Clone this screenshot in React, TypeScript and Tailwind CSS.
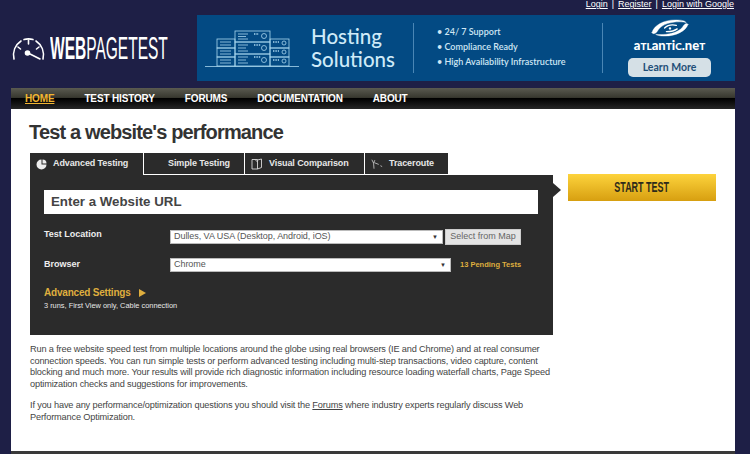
import React from 'react';

const tabs = [
  { label: 'Advanced Testing', width: 'w-[114px]', icon: 'globe', active: true },
  { label: 'Simple Testing', width: 'w-[101px]', icon: '', active: false },
  { label: 'Visual Comparison', width: 'w-[120px]', icon: 'doc', active: false },
  { label: 'Traceroute', width: 'w-[84px]', icon: 'trace', active: false },
];

function Gauge() {
  return (
    <svg className="shrink-0" width="33" height="24" viewBox="0 0 33 24" fill="none" stroke="#fff" strokeWidth="1.6" strokeLinecap="round">
      <path d="M2 22 C0.5 15 3 8 9 4 M12 2.6 C15 1.6 18 1.6 21 2.6 M24 4 C30 8 32.5 15 31 22" />
      <path d="M16.5 3 V7 M6 10 L8.5 12 M27 10 L24.5 12" />
      <path d="M16 16 L28 22" />
      <circle cx="15.5" cy="16" r="2" fill="#fff" />
    </svg>
  );
}

function Rack() {
  return (
    <svg width="94" height="38" viewBox="0 0 94 38" fill="none" stroke="#a9d6ee" strokeWidth="0.8">
      <path d="M0 36.5 H94" />
      <rect x="30" y="1" width="35" height="11" />
      <rect x="30" y="12" width="35" height="12" />
      <rect x="30" y="24" width="35" height="12" />
      <rect x="12" y="9" width="18" height="9" />
      <rect x="12" y="18" width="18" height="9" />
      <rect x="12" y="27" width="18" height="9" />
      <rect x="65" y="9" width="19" height="9" />
      <rect x="65" y="18" width="19" height="9" />
      <rect x="65" y="27" width="19" height="9" />
      <path d="M33 4 H43 M33 6.5 H41 M33 9 H43 M33 15 H43 M33 18 H41 M33 21 H43 M33 27 H43 M33 30 H41 M33 33 H43 M15 12 H26 M15 15 H26 M15 21 H26 M15 24 H26 M15 30 H26 M15 33 H26" />
      <circle cx="59" cy="6" r="2.5" />
      <circle cx="59" cy="18" r="2.5" />
      <circle cx="59" cy="30" r="2.5" />
      <circle cx="79" cy="13" r="2" />
      <circle cx="79" cy="22" r="2" />
      <circle cx="79" cy="31" r="2" />
      <path d="M49 4 H54 M49 15 H56 M49 27 H56 M68 12 H74 M68 21 H74 M68 30 H74" strokeWidth="1.4" strokeDasharray="1.4 1" />
    </svg>
  );
}

function Swirl() {
  return (
    <svg width="42" height="18" viewBox="0 0 42 20" fill="none" stroke="#fff" strokeLinecap="round">
      <path d="M1 15 C3 7 14 1 27 1 C34 1 38 2 39 4 C32 2 14 3 8 12 C6 16 2 18 1 15 Z" fill="#fff" strokeWidth="0.4" />
      <path d="M41 6 C39 13 28 19 15 19 C10 19 6 18 5 17 C12 18 29 17 35 9 C37 5 40 4 41 6 Z" fill="#fff" strokeWidth="0.4" />
      <path d="M15 10 C18 7 23 6 28 7 M29 11 C25 14 20 14 17 14" strokeWidth="1.5" />
      <circle cx="21" cy="10.5" r="1.3" fill="#fff" stroke="none" />
    </svg>
  );
}

function TabIcon({ name }: { name: string }) {
  if (name === 'globe') {
    return (
      <svg width="11" height="11" viewBox="0 0 11 11" fill="#ededed">
        <path d="M5.5 0.5 A5 5 0 1 0 10.5 5.5 H5.5 Z" />
        <path d="M6.5 0.5 A4 4 0 0 1 10.5 4.5 H6.5 Z" />
      </svg>
    );
  }
  if (name === 'doc') {
    return (
      <svg width="12" height="12" viewBox="0 0 12 12" fill="none" stroke="#d8d8d8" strokeWidth="0.9">
        <path d="M1 1.5 H6.5 V11 H1 Z M6.5 2 L10.5 1 V9.5 L6.5 11 M4 1.5 L6.5 4" />
      </svg>
    );
  }
  if (name === 'trace') {
    return (
      <svg width="12" height="12" viewBox="0 0 14 12" fill="none" stroke="#d8d8d8" strokeWidth="0.9">
        <path d="M1 1 L3 5 L3.5 11.5 M3 5 L4.5 1.5 M4 4.5 L9 6.5 M11 8 L13 9" />
      </svg>
    );
  }
  return null;
}

function FakeSelect({ value, width }: { value: string; width: string }) {
  return (
    <div className={`${width} h-[14px] bg-white flex items-center justify-between pl-[3px] pr-[4px] border border-[#bbb] text-[9px] tracking-[-0.05px] text-[#555]`}>
      <span>{value}</span>
      <span className="text-[6px] text-[#333]">▼</span>
    </div>
  );
}

export default function App() {
  return (
    <div className="w-[750px] h-[454px] overflow-hidden bg-[#1e1f46] font-['Liberation_Sans',Arial,sans-serif]">
      <div className="ml-[11px] w-[724px]">
        {/* top links */}
        <div className="h-[15px] flex justify-end gap-[4px] pr-[1px] text-[9px] leading-[8px] text-white">
          <a className="underline">Login</a>
          <span>|</span>
          <a className="underline">Register</a>
          <span>|</span>
          <a className="underline">Login with Google</a>
        </div>

        {/* logo and banner */}
        <div className="flex items-center h-[66px]">
          <div className="w-[186px] flex items-center gap-[5px] pl-[1px] pt-[1px]">
            <Gauge />
            <div className="w-[119px] shrink-0 whitespace-nowrap">
              <span className="inline-block origin-left scale-x-[0.485] text-[32px] leading-none text-white">
                <b>WEB</b>PAGETEST
              </span>
            </div>
          </div>
          <div className="w-[538px] h-[66px] bg-[#034a83] flex items-center font-['Lato',sans-serif]">
            <div className="w-[114px] pl-[8px] pt-[2px]"><Rack /></div>
            <div className="w-[102px] -mt-[1px] text-[20.5px] leading-[23px] font-medium text-[#cfeaf8]">
              Hosting<br />Solutions
            </div>
            <div className="w-px h-[50px] bg-[#4a86b5]" />
            <ul className="w-[188px] pl-[23px] -mt-[3px] text-[9px] leading-[15px] font-semibold text-[#cfe6f4]">
              <li>• 24/ 7 Support</li>
              <li>• Compliance Ready</li>
              <li>• High Availability Infrastructure</li>
            </ul>
            <div className="w-px h-[50px] bg-[#4a86b5]" />
            <div className="flex-1 flex flex-col items-center pl-[1px]">
              <Swirl />
              <div className="text-[13px] leading-[14px] font-black text-white mt-[1px] whitespace-nowrap">
                a<span className="text-[10px]">TL</span>an<span className="text-[10px]">T</span>i<span className="text-[10px]">C</span>.ne<span className="text-[10px]">T</span>
              </div>
              <div className="w-[83px] h-[19px] mt-[5px] rounded-[5px] bg-[#d5e0e6] text-[#1f4f78] text-[10.5px] font-bold flex items-center justify-center">
                Learn More
              </div>
            </div>
          </div>
        </div>

        {/* nav */}
        <div className="mt-[7px] h-[21px] flex gap-[30px] pl-[14px] pt-[3px] text-[10px] tracking-[-0.15px] font-bold text-white bg-[linear-gradient(#5a5a50_0%,#38382f_45%,#000_50%,#262626_100%)]">
          <a className="text-[#f2b632] underline">HOME</a>
          <a>TEST HISTORY</a>
          <a>FORUMS</a>
          <a>DOCUMENTATION</a>
          <a>ABOUT</a>
        </div>

        {/* content */}
        <div className="bg-white h-[342px] pl-[18px] pt-[11px]">
          <h1 className="text-[20px] leading-[25px] font-bold text-[#333] tracking-[-0.85px]">Test a website's performance</h1>

          <div className="mt-[8px] flex">
            <div className="w-[524px]">
              <div className="ml-[1px] flex h-[22px]">
                {tabs.map((tab) => (
                  <div
                    key={tab.label}
                    className={`${tab.width} flex items-center gap-[6px] bg-[#2b2b2b] border-r border-white text-[9px] tracking-[-0.1px] font-bold text-[#e8e8e8] ${tab.icon ? 'pl-[6px]' : 'pl-[24px]'} ${tab.active ? '' : 'border-b'}`}
                  >
                    <TabIcon name={tab.icon} />
                    <span>{tab.label}</span>
                  </div>
                ))}
              </div>

              <div className="relative ml-[1px] h-[160px] bg-[#2b2b2b] px-[14px] pt-[15px]">
                <div className="absolute right-[-8px] top-[8px] w-0 h-0 border-y-[7px] border-y-transparent border-l-[8px] border-l-[#2b2b2b]" />
                <div className="w-[494px] h-[24px] bg-white pl-[7px] flex items-center text-[13.3px] font-bold text-[#444]">
                  Enter a Website URL
                </div>
                <div className="mt-[15px] flex items-center h-[16px]">
                  <span className="w-[126px] text-[9px] font-bold text-[#eee] -mt-[5px]">Test Location</span>
                  <FakeSelect value="Dulles, VA USA (Desktop, Android, iOS)" width="w-[273px]" />
                  <div className="ml-[2px] w-[76px] h-[16px] bg-[#e4e4e4] border border-[#ccc] text-[9px] text-[#666] flex items-center justify-center">
                    Select from Map
                  </div>
                </div>
                <div className="mt-[12px] flex items-center h-[16px]">
                  <span className="w-[126px] text-[9px] font-bold text-[#eee] -mt-[1px]">Browser</span>
                  <FakeSelect value="Chrome" width="w-[281px]" />
                  <span className="ml-[9px] text-[7.5px] font-bold text-[#dfae3e]">13 Pending Tests</span>
                </div>
                <div className="mt-[13px] flex items-center gap-[8px] text-[10px] leading-[13px] tracking-[-0.2px] font-bold text-[#dfae3e]">
                  <span>Advanced Settings</span>
                  <span className="w-0 h-0 border-y-[4px] border-y-transparent border-l-[7px] border-l-[#dfae3e]" />
                </div>
                <div className="mt-[2px] text-[7.4px] leading-[10px] text-[#e8e8e8]">3 runs, First View only, Cable connection</div>
              </div>
            </div>

            <div className="ml-[15px] mt-[21px] w-[148px] h-[27px] bg-[linear-gradient(#fdd33c,#d79f10)] flex items-center justify-center text-[#2e2a1a]">
              <span className="inline-block scale-x-[0.64] text-[14px] font-bold whitespace-nowrap">START TEST</span>
            </div>
          </div>

          <div className="ml-[1px] mt-[9px] w-[523px] text-[9.2px] leading-[11.7px] tracking-[-0.15px] text-[#444]">
            <p>
              Run a free website speed test from multiple locations around the globe using real browsers (IE and Chrome) and at real consumer connection speeds. You can run simple tests or perform advanced testing including multi-step transactions, video capture, content blocking and much more. Your results will provide rich diagnostic information including resource loading waterfall charts, Page Speed optimization checks and suggestions for improvements.
            </p>
            <p className="mt-[9px]">
              If you have any performance/optimization questions you should visit the <a className="underline">Forums</a> where industry experts regularly discuss Web Performance Optimization.
            </p>
          </div>
        </div>
        <div className="h-[3px] bg-[#3a3a3a]" />
      </div>
    </div>
  );
}
